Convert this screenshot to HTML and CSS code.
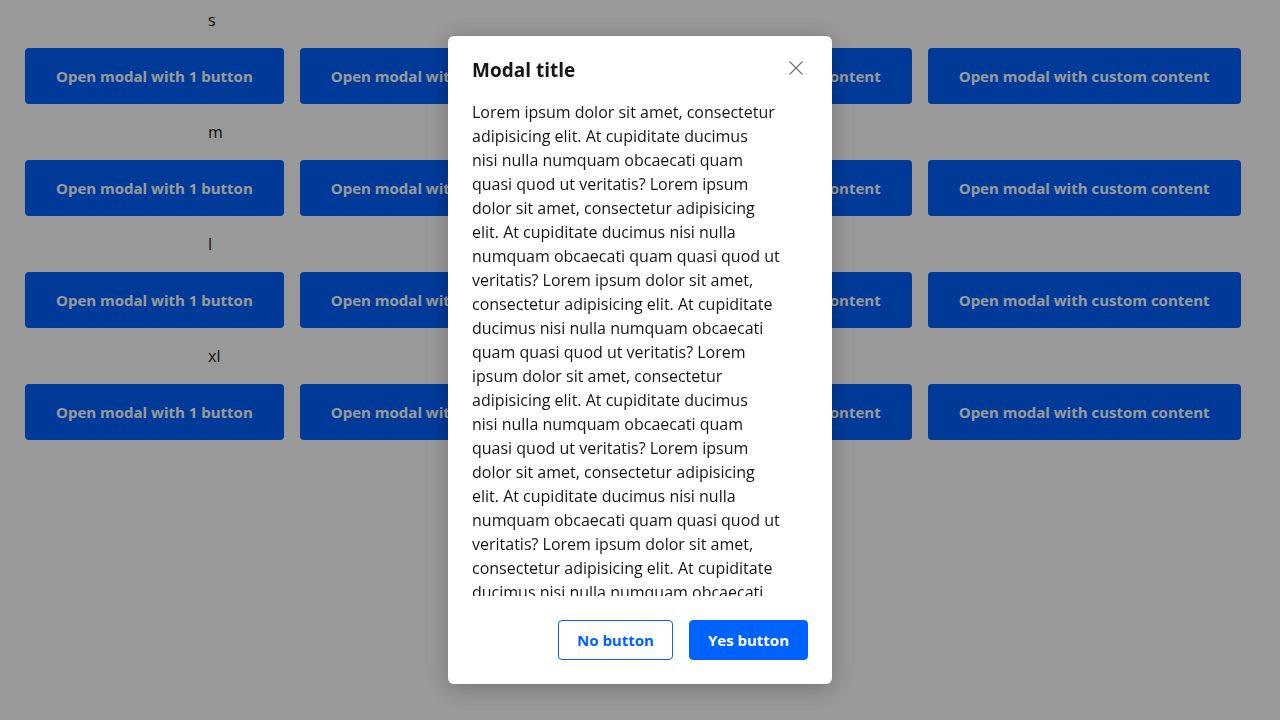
FILE: index.html
```html
<!DOCTYPE html>
<html>
<head>
<meta charset="utf-8">
<link rel="stylesheet" href="styles.css">
</head>
<body>
<div class="page">
  <div class="group">
    <div class="label">s</div>
    <div class="row">
      <button class="btn">Open modal with 1 button</button>
      <button class="btn">Open modal with 2 buttons</button>
      <button class="btn">Open modal with scrollable content</button>
      <button class="btn">Open modal with custom content</button>
    </div>
  </div>
  <div class="group">
    <div class="label">m</div>
    <div class="row">
      <button class="btn">Open modal with 1 button</button>
      <button class="btn">Open modal with 2 buttons</button>
      <button class="btn">Open modal with scrollable content</button>
      <button class="btn">Open modal with custom content</button>
    </div>
  </div>
  <div class="group">
    <div class="label">l</div>
    <div class="row">
      <button class="btn">Open modal with 1 button</button>
      <button class="btn">Open modal with 2 buttons</button>
      <button class="btn">Open modal with scrollable content</button>
      <button class="btn">Open modal with custom content</button>
    </div>
  </div>
  <div class="group">
    <div class="label">xl</div>
    <div class="row">
      <button class="btn">Open modal with 1 button</button>
      <button class="btn">Open modal with 2 buttons</button>
      <button class="btn">Open modal with scrollable content</button>
      <button class="btn">Open modal with custom content</button>
    </div>
  </div>
</div>
<div class="overlay">
  <div class="modal">
    <div class="modal-head">
      <h2 class="modal-title">Modal title</h2>
      <button class="close" aria-label="Close">
        <svg width="14" height="14" viewBox="0 0 14 14"><path d="M0.5 0.5 L13.5 13.5 M13.5 0.5 L0.5 13.5" stroke="#6f6f6f" stroke-width="1.1" fill="none"/></svg>
      </button>
    </div>
    <div class="modal-body">
      <p>Lorem ipsum dolor sit amet, consectetur<br>
adipisicing elit. At cupiditate ducimus<br>
nisi nulla numquam obcaecati quam<br>
quasi quod ut veritatis? Lorem ipsum<br>
dolor sit amet, consectetur adipisicing<br>
elit. At cupiditate ducimus nisi nulla<br>
numquam obcaecati quam quasi quod ut<br>
veritatis? Lorem ipsum dolor sit amet,<br>
consectetur adipisicing elit. At cupiditate<br>
ducimus nisi nulla numquam obcaecati<br>
quam quasi quod ut veritatis? Lorem<br>
ipsum dolor sit amet, consectetur<br>
adipisicing elit. At cupiditate ducimus<br>
nisi nulla numquam obcaecati quam<br>
quasi quod ut veritatis? Lorem ipsum<br>
dolor sit amet, consectetur adipisicing<br>
elit. At cupiditate ducimus nisi nulla<br>
numquam obcaecati quam quasi quod ut<br>
veritatis? Lorem ipsum dolor sit amet,<br>
consectetur adipisicing elit. At cupiditate<br>
ducimus nisi nulla numquam obcaecati<br>
quam quasi quod ut veritatis? Lorem<br>
ipsum dolor sit amet, consectetur<br>
adipisicing elit. At cupiditate ducimus</p>
    </div>
    <div class="modal-foot">
      <button class="fbtn secondary">No button</button>
      <button class="fbtn primary">Yes button</button>
    </div>
  </div>
</div>
</body>
</html>
```
FILE: styles.css
```css
html, body {
  margin: 0;
  padding: 0;
  background: #ffffff;
  font-family: "Open Sans", "Noto Sans", sans-serif;
  color: #161616;
}
.page {
  padding: 8px 25px;
}
.group {
  display: flex;
  flex-direction: column;
}
.label {
  height: 24px;
  line-height: 24px;
  font-size: 16px;
  padding-left: 183px;
  margin-bottom: 16px;
}
.row {
  display: flex;
  gap: 16px;
  margin-bottom: 16px;
}
.btn {
  height: 56px;
  padding: 0 31px;
  border: none;
  border-radius: 4px;
  background: #0062ff;
  color: #ffffff;
  font-family: inherit;
  font-size: 15px;
  font-weight: 700;
}
.overlay {
  position: fixed;
  inset: 0;
  background: rgba(0, 0, 0, 0.4);
  display: flex;
  justify-content: center;
  align-items: center;
}
.modal {
  width: 384px;
  height: 648px;
  box-sizing: border-box;
  background: #ffffff;
  border-radius: 6px;
  box-shadow: 0 4px 24px rgba(0, 0, 0, 0.25);
  display: flex;
  flex-direction: column;
  padding: 20px 24px 24px;
}
.modal-head {
  display: flex;
  justify-content: space-between;
  align-items: center;
  height: 28px;
  margin-bottom: 16px;
}
.modal-title {
  margin: 0;
  font-size: 19px;
  font-weight: 700;
  line-height: 28px;
}
.close {
  border: none;
  background: none;
  padding: 0;
  width: 14px;
  height: 14px;
  margin: 0 5px 4px 0;
  display: flex;
}
.modal-body {
  flex: 1;
  overflow: hidden;
}
.modal-body p {
  margin: 0;
  font-size: 16px;
  line-height: 24px;
  white-space: nowrap;
}
.modal-foot {
  display: flex;
  justify-content: flex-end;
  gap: 16px;
  margin-top: 24px;
}
.fbtn {
  height: 40px;
  padding: 0 18px;
  border-radius: 4px;
  font-family: inherit;
  font-size: 15px;
  font-weight: 700;
}
.secondary {
  background: #ffffff;
  color: #0062ff;
  border: 1px solid #0062ff;
}
.primary {
  background: #0062ff;
  color: #ffffff;
  border: 1px solid #0062ff;
}
```
